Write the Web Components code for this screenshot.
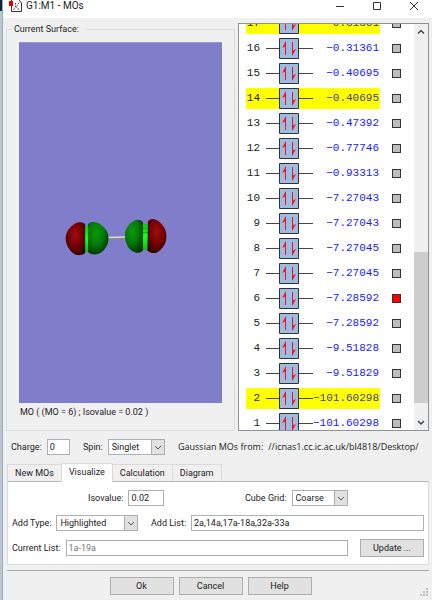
<!DOCTYPE html>
<html lang="en">
<head>
<meta charset="utf-8">
<title>G1:M1 - MOs</title>
<style>
html,body{margin:0;height:100%}
body{font:9px/12px Roboto,sans-serif;color:#222;background:linear-gradient(#14233f 11px,#c4c4c4 11px);display:flex;overflow:hidden}
mo-window{flex:1;min-width:0}
</style>
</head>
<body>
<mo-window>
  <title-bar slot="title">G1:M1 - MOs</title-bar>
  <surface-view slot="surface" caption="MO ( (MO = 6) ; Isovalue = 0.02 )">Current Surface:</surface-view>
  <mo-list slot="levels"></mo-list>
  <charge-bar slot="charge"></charge-bar>
  <tab-panel slot="tabs"></tab-panel>
  <dialog-footer slot="footer"></dialog-footer>
</mo-window>
<script>
const define = (name, html, init) => customElements.define(name, class extends HTMLElement {
  connectedCallback() {
    if (this.shadowRoot) return;
    this.attachShadow({mode: 'open'}).innerHTML = '<style>:host,*{box-sizing:border-box}</style>' + (typeof html === 'function' ? html(this) : html);
    if (init) init(this, this.shadowRoot);
  }
});

define('mo-window', `<style>
:host{display:flex;height:100vh;background:#f0f0f0;border-left:1px solid #7db5e0;margin-left:2px;flex-direction:column}
.top{display:flex;flex:1;min-height:0;gap:3px;padding:5px 3px 0 3px}
.left{flex:229;min-width:0;display:flex}.right{flex:191;min-width:0;display:flex}
</style>
<slot name="title"></slot>
<div class="top"><div class="left"><slot name="surface"></slot></div><div class="right"><slot name="levels"></slot></div></div>
<slot name="charge"></slot><slot name="tabs"></slot><slot name="footer"></slot>`);

define('title-bar', `<style>
:host{display:flex;align-items:center;flex:none;height:18px;padding:0 6px 6px 6px;background:#fff;font-size:10px;line-height:12px}
.name{flex:1;padding-left:4px}
.icon{display:block;flex:none}
nav{display:flex;gap:14px}
button{border:0;background:none;padding:0;width:23px;height:12px;display:grid;place-items:center}
</style>
<svg class="icon" width="13" height="12" viewBox="0 0 13 12"><path d="M2.500 0V11.500H12.500V3L10 0" fill="#fff" stroke="#333"/><path d="M4.500 10l2-3V3M6.500 6.500l2 1L10 10M10 2.500L8 6" fill="none" stroke="#555" stroke-dasharray="2 1"/><path d="M0 1h4v5H0z" fill="#e80000"/></svg>
<span class="name"><slot></slot></span>
<nav><button aria-label="Minimize"><svg width="9" height="9"><path d="M0 4.500H8" stroke="#333"/></svg></button>
<button aria-label="Maximize"><svg width="9" height="9"><path d="M.5.5h7v7h-7z" fill="none" stroke="#333"/></svg></button>
<button aria-label="Close"><svg width="9" height="9"><path d="M0 0L8 8M8 0L0 8" stroke="#333"/></svg></button></nav>`);

define('surface-view', el => `<style>
:host{display:flex;flex:1;min-width:0}
fieldset{flex:1;min-width:0;margin:0;border:1px solid #dcdcdc;padding:7px 12px 12px;display:flex;flex-direction:column;gap:3px}
legend{margin-left:-7px;padding:0 7px 0 2px}
.scene{flex:1;min-height:0;background:#807ecb;display:grid;border-top:1px solid #9997c8}
.scene svg{width:100%;height:100%}
.cap{padding-left:1px}
</style>
<fieldset><legend><slot></slot></legend>
<div class="scene"><svg viewBox="19 42 203 361" role="img" aria-label="Orbital surface">
<defs>
<radialGradient id="r" cx=".5" cy=".38" r=".65"><stop offset="0" stop-color="#9b1010"/><stop offset=".5" stop-color="#7c0000"/><stop offset="1" stop-color="#300"/></radialGradient>
<radialGradient id="g" cx=".4" cy=".35" r=".7"><stop offset="0" stop-color="#0b980e"/><stop offset=".5" stop-color="#067b08"/><stop offset="1" stop-color="#003500"/></radialGradient>
<linearGradient id="b" x1="0" y1="0" x2="0" y2="1"><stop offset="0" stop-color="#09c914"/><stop offset=".5" stop-color="#13ff28"/><stop offset="1" stop-color="#0bbb16"/></linearGradient>
</defs>
<path d="M108 237.500L126 237" stroke="#888" stroke-width="3"/><path d="M108 237L126 236.500" stroke="#ddd" stroke-width="1.500"/>
<path d="M84 225.500h7v26h-7z" fill="url(#b)"/>
<path d="M85 223.500C82 221 78 221.500 75 223C69 226.500 65.500 232 65.500 238C65.500 244 69 250 74 253.500C78 255.500 82 255 85 252.500Z" fill="url(#r)"/>
<path d="M88 223.500C91 220.500 96 221 100 223.500C105 227 108.500 232 108.500 238C108.500 243 105.500 249 101 252C97 254.500 92 255 88 251.500Z" fill="url(#g)"/>
<path d="M141 223.500h9v26h-9z" fill="url(#b)"/><path d="M142 228h5M143 232h6" stroke="#078b0c" stroke-dasharray="2 1"/>
<path d="M143 221.500C140 218.500 136 218.500 133 221C128 224 125 229 125 235C125 242 128 248 133 251C137 253 140 253 143 250Z" fill="url(#g)"/>
<path d="M148 221C151 217.500 155 218 159 221C164 225 166.500 230 166.500 236C166.500 243 163 248 158 251.500C154 253.500 151 253 147.500 250Z" fill="url(#r)"/>
</svg></div>
<div class="cap">${el.getAttribute('caption')}</div></fieldset>`);

define('mo-level', el => `<style>
:host{display:grid;grid-template-columns:134px 1fr;align-items:center;height:25px;flex:none}
.line{display:grid;grid-template-columns:14px 6px 47px 1fr;align-items:center;height:21px;font:11px/21px "Liberation Mono",monospace;padding-right:1px}
:host([marked]) .line{background:#ff0}
.n{text-align:right;color:#222}
.e{text-align:right;color:#1a1aff}
:host([marked]) .e{color:#44448c}
svg{display:block;grid-column:3}
input{appearance:none;margin:0 0 0 12px;width:9px;height:9px;border:1px solid #333;background:#bdbdbd}
input:checked{background:#f00}
</style>
<div class="line"><span class="n" id="n">${el.getAttribute('n')}</span>
<svg width="47" height="21" viewBox="0 0 47 21"><path d="M0 10.500H47" stroke="#444"/><path d="M13.500.5h19v20h-19z" fill="#9dbce0" stroke="#333"/><path d="M19.500 17V4M26.500 4V17" stroke="#f01020"/><path d="M20 3V8L16 10Z M26 18V13L30 11Z" fill="#f01020"/></svg>
<span class="e">${el.getAttribute('energy').replace('-', '−')}</span></div>
<input type="checkbox" aria-labelledby="n"${el.hasAttribute('on') ? ' checked' : ''}>`);

const control = `<style>
:host{display:flex;min-width:0;color:#222}
label{display:flex;align-items:center;gap:5px;flex:1;min-width:0;white-space:nowrap}
.box{position:relative;flex:1;min-width:0;display:flex}
input,select{font:inherit;color:inherit;width:100%;min-width:0;height:16px;border:1px solid #adb0b5;background:#fff;padding:0 0 0 2px;margin:0;border-radius:0;outline:0;appearance:none}
select{padding-left:3px}
:host([muted]) input{color:#777}
svg{position:absolute;right:0;top:0;pointer-events:none}
</style>`;
define('text-field', el => control + `<label><span>${el.getAttribute('label')}</span><span class="box"><input type="text" value="${el.getAttribute('value')}"></span></label>`);
define('select-field', el => control + `<label><span>${el.getAttribute('label')}</span><span class="box"><select><option>${el.getAttribute('value')}</option></select><svg width="14" height="16" viewBox="0 0 14 16"><path d="M.5.5h13v15H.5z" fill="#e1e1e1" stroke="#adadad"/><path d="M4 7L7 10L10 7" fill="none" stroke="#555"/></svg></span></label>`);

define('push-button', `<style>
:host{display:flex}
button{flex:1;font:inherit;color:#222;height:18px;border:1px solid #adadad;background:#e1e1e1;padding:0}
</style><button type="button"><slot></slot></button>`);

define('charge-bar', `<style>
:host{display:flex;flex:none;align-items:center;height:32px;padding-left:8px;white-space:nowrap}
text-field{width:59px;margin-right:13px}
select-field{width:82px;margin-right:13px}
.src{font-family:"Open Sans",sans-serif;display:flex;gap:5px}
</style>
<text-field label="Charge:" value="0"></text-field><select-field label="Spin:" value="Singlet"></select-field>
<div class="src"><span>Gaussian MOs from:</span><span>//icnas1.cc.ic.ac.uk/bl4818/Desktop/</span></div>`);

define('tab-panel', `<style>
:host{display:block;flex:none;padding:0 3px 0 4px}
.tabs{display:flex;align-items:flex-end;height:18px}
.tabs button{font:inherit;color:#222;height:17px;border:1px solid #d9d9d9;border-bottom:0;background:#f0f0f0;padding:0 7px;margin-right:-1px}
.tabs button[aria-selected=true]{background:#fff;height:19px;margin-bottom:-1px;padding-bottom:2px;position:relative}
.panel{background:#fff;border:1px solid #dcdcdc;border-top-color:#b8b8b8;height:84px;padding:8px 4px;display:flex;flex-direction:column;gap:8px}
.row{display:flex;align-items:center;height:17px}
.iso{width:76px;margin-left:76px}
.cube{width:103px;margin-left:81px}
.type{width:126px;margin-right:13px}
.list{flex:1}
.upd{width:64px;margin:0 0 0 12px}
</style>
<div class="tabs" role="tablist"><button role="tab">New MOs</button><button role="tab" aria-selected="true">Visualize</button><button role="tab">Calculation</button><button role="tab">Diagram</button></div>
<div class="panel" role="tabpanel">
<div class="row"><text-field class="iso" label="Isovalue:" value="0.02"></text-field><select-field class="cube" label="Cube Grid:" value="Coarse"></select-field></div>
<div class="row"><select-field class="type" label="Add Type:" value="Highlighted"></select-field><text-field class="list" label="Add List:" value="2a,14a,17a-18a,32a-33a"></text-field></div>
<div class="row"><text-field class="list" muted label="Current List:" value="1a-19a"></text-field><push-button class="upd">Update ...</push-button></div>
</div>`);

define('dialog-footer', `<style>
:host{display:flex;flex:none;position:relative;justify-content:center;gap:5px;margin:5px 3px 0 4px;padding:6px 15px 5px 0;border-top:1px solid #a8a8a8}
push-button{width:64px}
svg{position:absolute;right:1px;bottom:4px}
</style>
<push-button>Ok</push-button><push-button>Cancel</push-button><push-button>Help</push-button>
<svg width="8" height="8"><path d="M6 0h2v2H6zM3 3h2v2H3zM6 3h2v2H6zM0 6h2v2H0zM3 6h2v2H3zM6 6h2v2H6z" fill="#bfbfbf"/></svg>`);

// Defined last: its scroll position needs the finished layout of the other parts.
define('mo-list', `<style>
:host{display:flex;flex:1;min-width:0;border:1px solid #8d9299;background:#fff}
.rows{flex:1;min-width:0;overflow:hidden;padding-left:7px;display:flex;flex-direction:column}
.bar{width:14px;background:#f0f0f0;display:flex;flex-direction:column;flex:none}
.bar svg{display:block;margin:4px 3px 0}
.thumb{background:#cdcdcd;height:151px;margin-top:auto}
</style>
<div class="rows"></div>
<div class="bar"><svg width="8" height="7"><path d="M1 5.500L4 2.500L7 5.500" fill="none" stroke="#444" stroke-width="1.500"/></svg><div class="thumb"></div>
<svg width="8" height="23"><path d="M1 14L4 17L7 14" fill="none" stroke="#444" stroke-width="1.500"/></svg></div>`,
(el, root) => {
  const energies = ['-101.60298','-101.60298','-9.51829','-9.51828','-7.28592','-7.28592','-7.27045','-7.27045','-7.27043','-7.27043','-0.93313','-0.77746','-0.47392','-0.40695','-0.40695','-0.31361','-0.31361'];
  const rows = root.querySelector('.rows');
  for (let n = energies.length; n > 0; n--) {
    const row = document.createElement('mo-level');
    row.setAttribute('n', n);
    row.setAttribute('energy', energies[n - 1]);
    if ([2, 14, 17].includes(n)) row.setAttribute('marked', '');
    if (n === 6) row.setAttribute('on', '');
    rows.append(row);
  }
  rows.scrollTop = 13;
});
</script>
</body>
</html>
